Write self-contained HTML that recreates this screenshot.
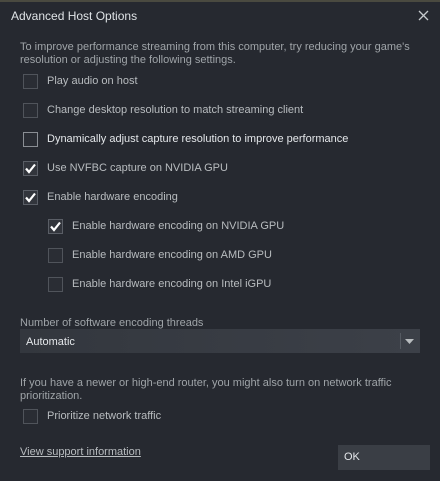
<!DOCTYPE html>
<html><head><style>
body{margin:0;width:440px;height:481px;background:#262930;font-family:"Liberation Sans",sans-serif;color:#b8bcbf;position:relative;overflow:hidden;font-size:11px}
.top{position:absolute;left:0;top:0;width:440px;height:2px;background:#4a4a40}
.a{position:absolute;white-space:nowrap}
.cb{position:absolute;width:13px;height:13px;border:1px solid #50545b;background:#2a2d34}
.cb.on{background:#32353c;border-color:#5a5e66}
.cb svg{position:absolute;left:1px;top:1px}
</style></head><body>
<div class="top"></div>
<div class="a" style="left:11px;top:9px;font-size:12px;color:#dfe3e6">Advanced Host Options</div>
<svg class="a" style="left:418px;top:10px" width="11" height="11"><path d="M1 1L10 10M10 1L1 10" stroke="#c6cacd" stroke-width="1.3"/></svg>
<div class="a" style="left:20px;top:41px;line-height:13px;color:#9fa4a8">To improve performance streaming from this computer, try reducing your game's<br>resolution or adjusting the following settings.</div>

<div class="cb" style="left:23px;top:74px"></div><div class="a" style="left:47px;top:75px">Play audio on host</div>
<div class="cb" style="left:23px;top:103px"></div><div class="a" style="left:47px;top:104px">Change desktop resolution to match streaming client</div>
<div class="cb" style="left:23px;top:132px;border-color:#8a8e94"></div><div class="a" style="left:47px;top:133px;color:#e4e7ea">Dynamically adjust capture resolution to improve performance</div>
<div class="cb on" style="left:23px;top:161px"><svg width="11" height="11"><path d="M1 5.5L4 9L10 1.5" stroke="#fff" stroke-width="2.2" fill="none"/></svg></div><div class="a" style="left:47px;top:162px">Use NVFBC capture on NVIDIA GPU</div>
<div class="cb on" style="left:23px;top:190px"><svg width="11" height="11"><path d="M1 5.5L4 9L10 1.5" stroke="#fff" stroke-width="2.2" fill="none"/></svg></div><div class="a" style="left:47px;top:191px">Enable hardware encoding</div>
<div class="cb on" style="left:48px;top:219px"><svg width="11" height="11"><path d="M1 5.5L4 9L10 1.5" stroke="#fff" stroke-width="2.2" fill="none"/></svg></div><div class="a" style="left:72px;top:220px">Enable hardware encoding on NVIDIA GPU</div>
<div class="cb" style="left:48px;top:248px"></div><div class="a" style="left:72px;top:249px">Enable hardware encoding on AMD GPU</div>
<div class="cb" style="left:48px;top:277px"></div><div class="a" style="left:72px;top:278px">Enable hardware encoding on Intel iGPU</div>

<div class="a" style="left:20px;top:317px;color:#9fa4a8">Number of software encoding threads</div>
<div class="a" style="left:20px;top:329px;width:400px;height:24px;background:linear-gradient(90deg,#33373e,#3c4048)"></div>
<div class="a" style="left:26px;top:336px;color:#e4e7ea">Automatic</div>
<div class="a" style="left:400px;top:333px;width:1px;height:16px;background:#555a62"></div>
<svg class="a" style="left:405px;top:339px" width="10" height="6"><path d="M0 0H9L4.5 5Z" fill="#b8bcbf"/></svg>

<div class="a" style="left:20px;top:377px;line-height:13px;color:#9fa4a8">If you have a newer or high-end router, you might also turn on network traffic<br>prioritization.</div>
<div class="cb" style="left:23px;top:409px"></div><div class="a" style="left:47px;top:410px">Prioritize network traffic</div>
<div class="a" style="left:20px;top:446px;text-decoration:underline">View support information</div>
<div class="a" style="left:338px;top:445px;width:92px;height:25px;background:#3a3e45"></div>
<div class="a" style="left:344px;top:451px;color:#e4e7ea">OK</div>
</body></html>
